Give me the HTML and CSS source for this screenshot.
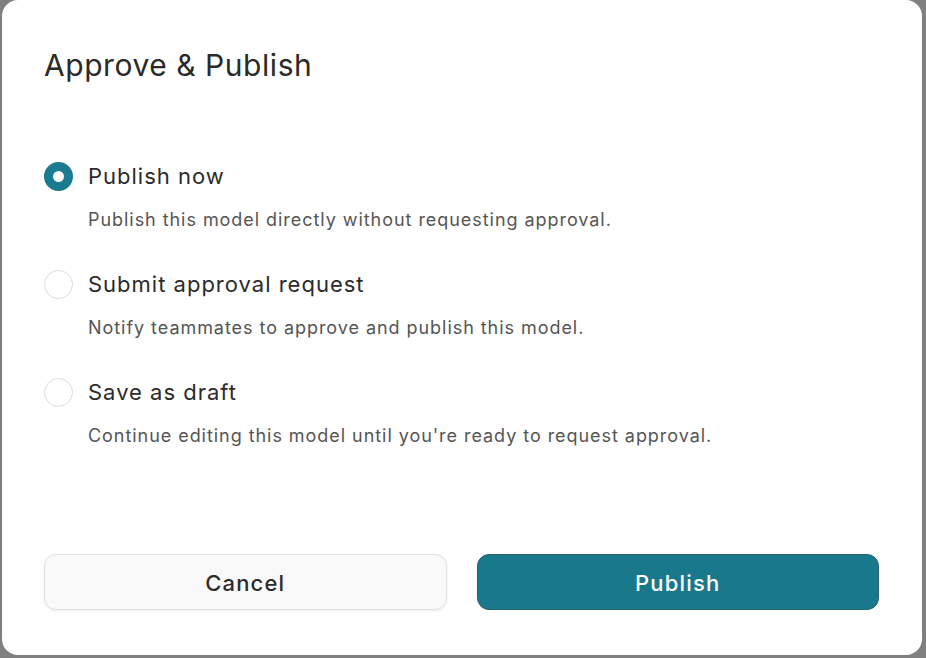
FILE: index.html
```html
<!DOCTYPE html>
<html lang="en">
<head>
  <meta charset="UTF-8" />
  <meta name="viewport" content="width=device-width, initial-scale=1.0"/>
  <title>Approve &amp; Publish</title>
  <link rel="stylesheet" href="styles.css">
</head>
<body>
  <div class="dialog">
    <h1>Approve &amp; Publish</h1>

    <div class="options">
      <label class="option">
        <div class="option-head">
          <span class="radio checked"></span>
          <span class="option-title">Publish now</span>
        </div>
        <p class="option-desc">Publish this model directly without requesting approval.</p>
      </label>

      <label class="option">
        <div class="option-head">
          <span class="radio"></span>
          <span class="option-title">Submit approval request</span>
        </div>
        <p class="option-desc">Notify teammates to approve and publish this model.</p>
      </label>

      <label class="option">
        <div class="option-head">
          <span class="radio"></span>
          <span class="option-title">Save as draft</span>
        </div>
        <p class="option-desc">Continue editing this model until you're ready to request approval.</p>
      </label>
    </div>

    <div class="actions">
      <button class="btn btn-cancel">Cancel</button>
      <button class="btn btn-primary">Publish</button>
    </div>
  </div>
</body>
</html>
```

FILE: styles.css
```css
body {
  font-family: Inter, "Noto Sans", sans-serif;
  background: #808080;
  margin: 0;
  height: 658px;
  overflow: hidden;
}
.dialog {
  box-sizing: border-box;
  width: 920px;
  height: 655px;
  margin-left: 2px;
  background: #ffffff;
  border-radius: 16px;
  padding: 47px 43px 45px 42px;
  display: flex;
  flex-direction: column;
}
h1 {
  margin: 0;
  font-size: 30px;
  line-height: 36px;
  font-weight: 400;
  color: #2a2a2a;
  letter-spacing: 0.55px;
}
.options {
  margin-top: 79px;
  display: flex;
  flex-direction: column;
  gap: 38px;
}
.option {
  display: block;
  cursor: pointer;
}
.option-head {
  display: flex;
  align-items: center;
  gap: 15px;
  height: 28px;
}
.radio {
  box-sizing: border-box;
  width: 29px;
  height: 29px;
  border-radius: 50%;
  border: 1.5px solid #dcdcdc;
  background: #fff;
  flex-shrink: 0;
}
.radio.checked {
  border: 9.5px solid #1a7a8f;
}
.option-title {
  font-size: 22px;
  color: #2b2b2b;
  letter-spacing: 1px;
}
.option-desc {
  margin: 18px 0 0 44px;
  font-size: 18px;
  line-height: 24px;
  color: #555555;
  letter-spacing: 0.95px;
}
.actions {
  margin-top: auto;
  display: flex;
  gap: 30px;
}
.btn {
  flex: 1;
  height: 56px;
  border-radius: 12px;
  font-family: inherit;
  font-size: 22px;
  font-weight: 500;
  letter-spacing: 1.2px;
  padding-top: 2px;
  cursor: pointer;
}
.btn-cancel {
  background: #f9f9f9;
  border: 1px solid #e2e2e2;
  color: #2b2b2b;
  box-shadow: 0 1px 3px rgba(0,0,0,0.08);
}
.btn-primary {
  background: #1a788d;
  border: 1px solid #2c5f6c;
  color: #ffffff;
}
```
